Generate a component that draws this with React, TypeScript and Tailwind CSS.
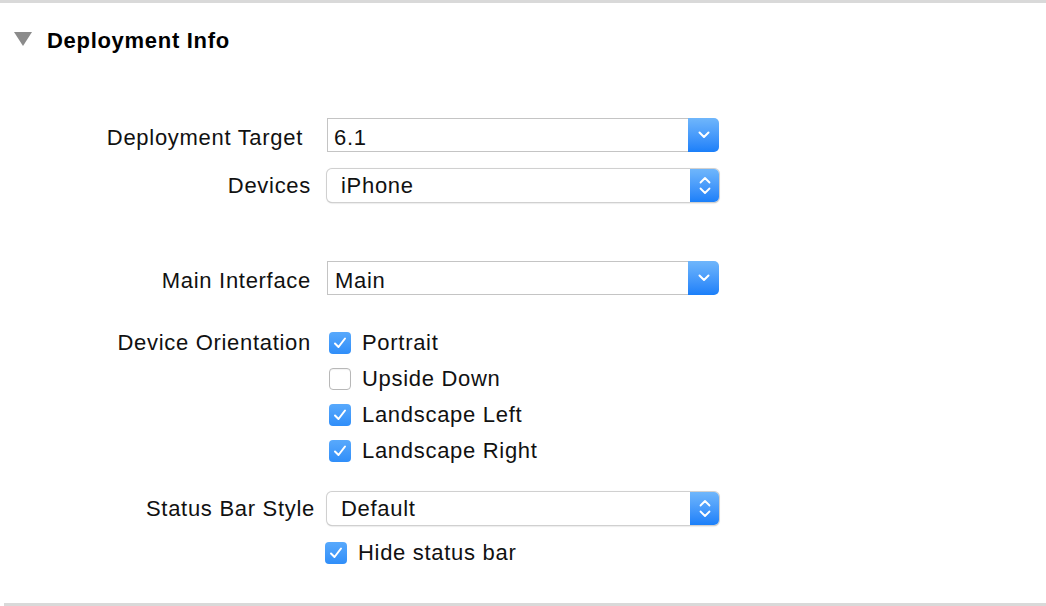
import type { ReactNode } from 'react'

// ---------------------------------------------------------------------------
// Small controls
// ---------------------------------------------------------------------------

function ComboBox({ value, textPad = 'pl-[6px] pt-[5px]' }: { value: string; textPad?: string }) {
  return (
    <div className="relative flex h-[34px] w-[392px] items-stretch">
      <div className={`flex flex-1 items-center border border-r-0 border-[#c4c4c4] bg-white ${textPad}`}>
        {value}
      </div>
      <div className="flex w-[31px] items-center justify-center rounded-r-[5px] bg-gradient-to-b from-[#6fb6fb] to-[#1a7ff9]">
        <svg width="12" height="8" viewBox="0 0 12 8" fill="none">
          <path d="M1.5 1.5 L6 6 L10.5 1.5" stroke="white" strokeWidth="2" strokeLinecap="round" strokeLinejoin="round" />
        </svg>
      </div>
    </div>
  )
}

function PopUp({ value }: { value: string }) {
  return (
    <div className="relative flex h-[33px] w-[392px] items-stretch rounded-[5px] bg-white shadow-[0_0.5px_1.5px_rgba(0,0,0,0.35)] ring-1 ring-[#d0d0d0]">
      <div className="flex flex-1 items-center pl-[14px] pt-[1px]">{value}</div>
      <div className="flex w-[29px] flex-col items-center justify-center gap-[3px] rounded-r-[5px] bg-gradient-to-b from-[#6fb6fb] to-[#1a7ff9]">
        <svg width="12" height="8" viewBox="0 0 12 8" fill="none">
          <path d="M1.5 6.5 L6 2 L10.5 6.5" stroke="white" strokeWidth="1.8" strokeLinecap="round" strokeLinejoin="round" />
        </svg>
        <svg width="12" height="8" viewBox="0 0 12 8" fill="none">
          <path d="M1.5 1.5 L6 6 L10.5 1.5" stroke="white" strokeWidth="1.8" strokeLinecap="round" strokeLinejoin="round" />
        </svg>
      </div>
    </div>
  )
}

function CheckBox({ label, checked }: { label: string; checked: boolean }) {
  return (
    <div className="flex h-[36px] items-center">
      {checked ? (
        <div className="flex h-[22px] w-[22px] items-center justify-center rounded-[4px] bg-gradient-to-b from-[#58a9fc] to-[#2f8ef9]">
          <svg width="14" height="12" viewBox="0 0 14 12" fill="none">
            <path d="M2 6.5 L5.5 10 L12 1.5" stroke="white" strokeWidth="2" strokeLinecap="round" strokeLinejoin="round" />
          </svg>
        </div>
      ) : (
        <div className="h-[22px] w-[22px] rounded-[4px] border border-[#b8b8b8] bg-white shadow-[inset_0_1px_1px_rgba(0,0,0,0.05)]" />
      )}
      <span className="ml-[11px]">{label}</span>
    </div>
  )
}

function Row({
  label,
  labelClass = 'w-[311px] text-right pt-[1px]',
  children,
}: {
  label: string
  labelClass?: string
  children: ReactNode
}) {
  return (
    <div className="flex items-center">
      <div className={`shrink-0 whitespace-nowrap ${labelClass}`}>{label}</div>
      <div className="relative ml-[16px]">{children}</div>
    </div>
  )
}

// ---------------------------------------------------------------------------
// Page
// ---------------------------------------------------------------------------

export default function App() {
  return (
    <div className="flex h-[606px] w-[1046px] flex-col overflow-hidden bg-white font-['Liberation_Sans',Arial,sans-serif] text-[22px] leading-6 tracking-[0.7px] text-[#111]">
      <div className="h-[3px] bg-[#d9d9d9]" />

      {/* Section header */}
      <div className="mt-[26px] flex h-6 items-center">
        <svg className="mb-[4px] ml-[14px]" width="18" height="14" viewBox="0 0 18 14">
          <path d="M0 0 H18 L9 14 Z" fill="#8b8b8b" />
        </svg>
        <h2 className="ml-[15px] font-bold text-black">Deployment Info</h2>
      </div>

      <div className="mt-[65px]">
        <Row label="Deployment Target" labelClass="w-[311px] pr-[8px] pt-[6px] text-right">
          <ComboBox value="6.1" textPad="pl-[6px] pt-[6px]" />
        </Row>
      </div>

      <div className="mt-[17px]">
        <Row label="Devices">
          <PopUp value="iPhone" />
        </Row>
      </div>

      <div className="mt-[59px]">
        <Row label="Main Interface" labelClass="w-[311px] pt-[5px] text-right">
          <ComboBox value="Main" textPad="pl-[7px] pt-[5px]" />
        </Row>
      </div>

      {/* Orientation checkboxes */}
      <div className="mt-[30px] flex items-start">
        <div className="flex h-[36px] w-[311px] shrink-0 items-center justify-end">
          Device Orientation
        </div>
        <div className="ml-[18px] flex flex-col">
          <CheckBox label="Portrait" checked />
          <CheckBox label="Upside Down" checked={false} />
          <CheckBox label="Landscape Left" checked />
          <CheckBox label="Landscape Right" checked />
        </div>
      </div>

      <div className="mt-[23px]">
        <Row label="Status Bar Style" labelClass="w-[315px] -mr-[4px] overflow-hidden pl-[146px] text-left">
          <PopUp value="Default" />
        </Row>
      </div>

      <div className="ml-[325px] mt-[10px]">
        <CheckBox label="Hide status bar" checked />
      </div>

      <div className="ml-[4px] mt-[32px] h-[3px] bg-[#d9d9d9]" />
    </div>
  )
}
